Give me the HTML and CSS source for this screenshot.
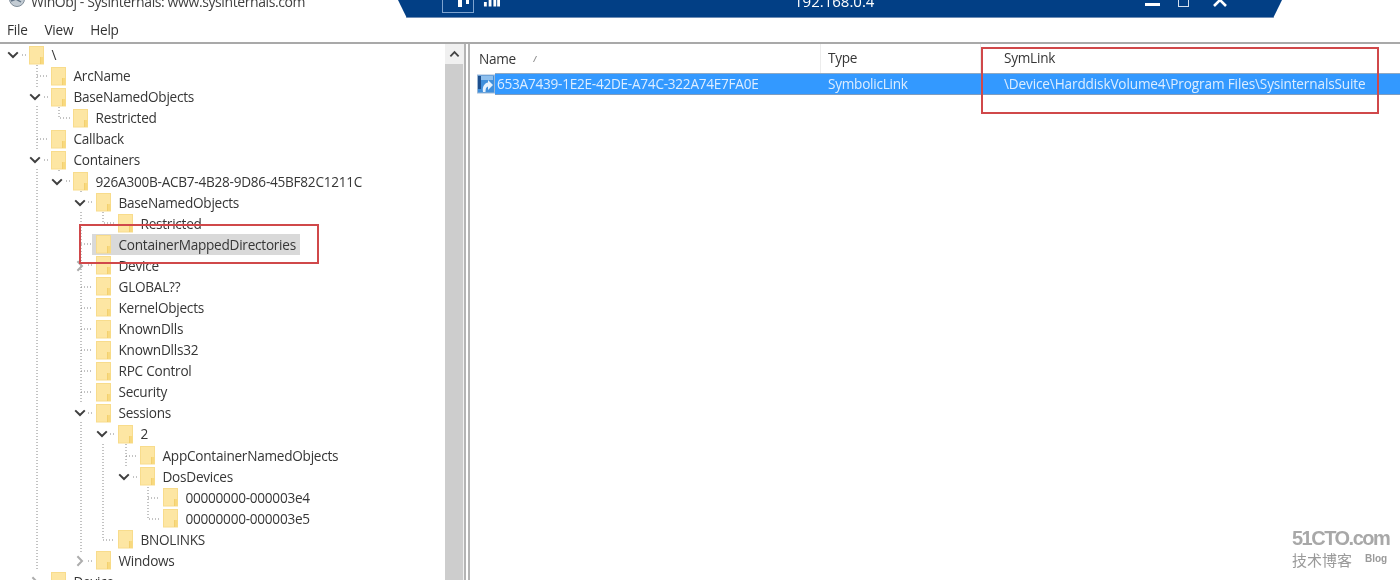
FILE: index.html
```html
<!DOCTYPE html>
<html lang="en">
<head>
<meta charset="utf-8">
<title>WinObj</title>
<link rel="stylesheet" href="styles.css">
</head>
<body>
<svg class="defs" width="0" height="0" aria-hidden="true">
  <symbol id="folder" viewBox="0 0 15 19">
    <rect x="0.5" y="0.5" width="14" height="17.5" fill="#fde6a3" stroke="#f8dc8c"/>
    <rect x="11.5" y="11" width="3" height="7" fill="#f8d97f"/>
    <path d="M11.5 11V18" stroke="#efc861" stroke-width="0.7"/>
  </symbol>
  <symbol id="open" viewBox="0 0 12 8">
    <path d="M1.2 1.4L6 6L10.8 1.4" fill="none" stroke="#3f3f3f" stroke-width="2"/>
  </symbol>
  <symbol id="closed" viewBox="0 0 8 12">
    <path d="M1.4 1.2L6 6L1.4 10.8" fill="none" stroke="#adadad" stroke-width="2"/>
  </symbol>
</svg>
<div class="app">
  <div class="title">
    <svg class="app-icon" viewBox="0 0 18 18"><circle cx="9" cy="4" r="7.5" fill="#c3ccd4" stroke="#7f8c98"/><path d="M3 6L14 2M4 2L13 7" stroke="#5f7184" stroke-width="1.4"/></svg>
    <span>WinObj - Sysinternals: www.sysinternals.com</span>
  </div>
  <div class="menu"><span>File</span><span>View</span><span>Help</span></div>
  <div class="panes">
    <div class="tree-pane">
      <div class="tree">
        <svg class="guides" viewBox="0 44 445 536" aria-hidden="true">
          <path d="M37 65V88M37 106V151M37 169V570M37 76H48M44 97H48M37 139H48M44 160H48
                   M59 107V118H70M59 170V172M66 181H70
                   M81 191V193M81 212V404M81 422V552M88 202H92M81 244H92M88 265H92M81 287H93M81 308H93M81 329H93M81 350H93M81 371H93M81 392H93M88 413H92M88 561H92
                   M103 212V223H115M103 444V540H115M110 434H115
                   M126 444V468M126 456H137M133 477H137
                   M148 487V519H160M148 498H160
                   M22 55H26" />
        </svg>
        <div class="row l0"><svg class="tw"><use href="#open"/></svg><span class="node"><svg class="fd"><use href="#folder"/></svg><span class="label">\</span></span></div>
        <div class="row l1"><span class="tw"></span><span class="node"><svg class="fd"><use href="#folder"/></svg><span class="label">ArcName</span></span></div>
        <div class="row l1"><svg class="tw"><use href="#open"/></svg><span class="node"><svg class="fd"><use href="#folder"/></svg><span class="label">BaseNamedObjects</span></span></div>
        <div class="row l2"><span class="tw"></span><span class="node"><svg class="fd"><use href="#folder"/></svg><span class="label">Restricted</span></span></div>
        <div class="row l1"><span class="tw"></span><span class="node"><svg class="fd"><use href="#folder"/></svg><span class="label">Callback</span></span></div>
        <div class="row l1"><svg class="tw"><use href="#open"/></svg><span class="node"><svg class="fd"><use href="#folder"/></svg><span class="label">Containers</span></span></div>
        <div class="row l2"><svg class="tw"><use href="#open"/></svg><span class="node"><svg class="fd"><use href="#folder"/></svg><span class="label">926A300B-ACB7-4B28-9D86-45BF82C1211C</span></span></div>
        <div class="row l3"><svg class="tw"><use href="#open"/></svg><span class="node"><svg class="fd"><use href="#folder"/></svg><span class="label">BaseNamedObjects</span></span></div>
        <div class="row l4"><span class="tw"></span><span class="node"><svg class="fd"><use href="#folder"/></svg><span class="label">Restricted</span></span></div>
        <div class="row l3"><span class="tw"></span><span class="node selected"><svg class="fd"><use href="#folder"/></svg><span class="label">ContainerMappedDirectories</span></span></div>
        <div class="row l3"><svg class="tw tw-closed"><use href="#closed"/></svg><span class="node"><svg class="fd"><use href="#folder"/></svg><span class="label">Device</span></span></div>
        <div class="row l3"><span class="tw"></span><span class="node"><svg class="fd"><use href="#folder"/></svg><span class="label">GLOBAL??</span></span></div>
        <div class="row l3"><span class="tw"></span><span class="node"><svg class="fd"><use href="#folder"/></svg><span class="label">KernelObjects</span></span></div>
        <div class="row l3"><span class="tw"></span><span class="node"><svg class="fd"><use href="#folder"/></svg><span class="label">KnownDlls</span></span></div>
        <div class="row l3"><span class="tw"></span><span class="node"><svg class="fd"><use href="#folder"/></svg><span class="label">KnownDlls32</span></span></div>
        <div class="row l3"><span class="tw"></span><span class="node"><svg class="fd"><use href="#folder"/></svg><span class="label">RPC Control</span></span></div>
        <div class="row l3"><span class="tw"></span><span class="node"><svg class="fd"><use href="#folder"/></svg><span class="label">Security</span></span></div>
        <div class="row l3"><svg class="tw"><use href="#open"/></svg><span class="node"><svg class="fd"><use href="#folder"/></svg><span class="label">Sessions</span></span></div>
        <div class="row l4"><svg class="tw"><use href="#open"/></svg><span class="node"><svg class="fd"><use href="#folder"/></svg><span class="label">2</span></span></div>
        <div class="row l5"><span class="tw"></span><span class="node"><svg class="fd"><use href="#folder"/></svg><span class="label">AppContainerNamedObjects</span></span></div>
        <div class="row l5"><svg class="tw"><use href="#open"/></svg><span class="node"><svg class="fd"><use href="#folder"/></svg><span class="label">DosDevices</span></span></div>
        <div class="row l6"><span class="tw"></span><span class="node"><svg class="fd"><use href="#folder"/></svg><span class="label">00000000-000003e4</span></span></div>
        <div class="row l6"><span class="tw"></span><span class="node"><svg class="fd"><use href="#folder"/></svg><span class="label">00000000-000003e5</span></span></div>
        <div class="row l4"><span class="tw"></span><span class="node"><svg class="fd"><use href="#folder"/></svg><span class="label">BNOLINKS</span></span></div>
        <div class="row l3"><svg class="tw tw-closed"><use href="#closed"/></svg><span class="node"><svg class="fd"><use href="#folder"/></svg><span class="label">Windows</span></span></div>
        <div class="row l1"><svg class="tw tw-closed"><use href="#closed"/></svg><span class="node"><svg class="fd"><use href="#folder"/></svg><span class="label">Device</span></span></div>
      </div>
      <div class="scrollbar">
        <div class="scroll-btn"><svg viewBox="0 0 12 8" class="scroll-up"><path d="M1.5 6.5L6 2L10.5 6.5" fill="none" stroke="#444" stroke-width="2"/></svg></div>
        <div class="scroll-thumb"></div>
      </div>
    </div>
    <div class="list-pane">
      <div class="list-head">
        <div class="col col-name">Name<svg class="sort" viewBox="0 0 6 8"><path d="M1.5 7L4.5 1" stroke="#8a8a8a" stroke-width="1"/></svg></div>
        <div class="col col-type">Type</div>
        <div class="col col-link">SymLink</div>
      </div>
      <div class="list-row">
        <svg class="link-icon" viewBox="0 0 18 20"><rect x="0.5" y="1" width="17" height="18" fill="#3f8fdc" stroke="#9db8d6"/><path d="M4 2H16V6H4z" fill="#8fc0ee"/><rect x="1" y="2" width="3" height="13" fill="#1d4f8e"/><path d="M6 18C5 12 8 9 11 8.500V6L16 11L11 16V12.500C9 13 8.500 15 8.500 18z" fill="#e6f2fd"/></svg>
        <div class="row-cells">
          <div class="cell cell-name">653A7439-1E2E-42DE-A74C-322A74E7FA0E</div>
          <div class="cell cell-type">SymbolicLink</div>
          <div class="cell cell-link">\Device\HarddiskVolume4\Program Files\SysinternalsSuite</div>
        </div>
      </div>
    </div>
  </div>
</div>

<div class="rdp">
  <div class="rdp-pin">
    <span class="pin-stem"></span>
    <span class="pin-stub"></span>
  </div>
  <svg class="rdp-signal" viewBox="0 0 18 14"><path d="M1 9h3v5H1zM6 6h3v8H6zM11 3h3v11h-3zM15 0h3v14h-3z" fill="#fff"/></svg>
  <span class="rdp-host">192.168.0.4</span>
  <span class="rdp-min"></span>
  <span class="rdp-restore"></span>
  <svg class="rdp-close" viewBox="0 0 16 8"><path d="M2 -6L14 6M14 -6L2 6" stroke="#fff" stroke-width="2.6"/></svg>
</div>

<div class="mark mark-tree"></div>
<div class="mark mark-link"></div>

<div class="watermark">
  <div class="wm-top">51CTO.com</div>
  <div class="wm-bottom"><span>技术博客</span><span class="wm-blog">Blog</span></div>
</div>
</body>
</html>
```

FILE: styles.css
```css
html, body {
  margin: 0;
  height: 580px;
  overflow: hidden;
  background: #fff;
}
body {
  position: relative;
  font-family: "Open Sans", "Noto Sans", sans-serif;
  font-size: 13.6px;
  letter-spacing: -0.25px;
  color: #363636;
  filter: blur(0.35px);
}
.defs { position: absolute; }
.app {
  display: flex;
  flex-direction: column;
  height: 580px;
}
.title {
  height: 21px;
  overflow: hidden;
  display: flex;
  align-items: flex-start;
  gap: 5px;
  padding-left: 8px;
  font-size: 14px;
  letter-spacing: -0.4px;
  line-height: 20px;
  color: #3f3f3f;
}
.title span { margin-top: -8px; }
.app-icon { width: 18px; height: 18px; margin-top: -5px; flex: none; }
.menu {
  height: 21px;
  display: flex;
  gap: 17px;
  padding-left: 7px;
  line-height: 18px;
  color: #333;
}
.panes {
  flex: 1;
  display: flex;
  min-height: 0;
  border-top: 2px solid #a9a9a9;
}
.tree-pane {
  width: 464px;
  flex: none;
  display: flex;
  border-right: 2px solid #b4b4b4;
}
.tree {
  position: relative;
  flex: 1;
  overflow: hidden;
  padding-top: 0.5px;
}
.guides {
  position: absolute;
  left: 0;
  top: 0;
  width: 445px;
  height: 536px;
  fill: none;
  stroke: #868686;
  stroke-width: 1;
  stroke-dasharray: 1 2;
}
.row {
  position: relative;
  display: flex;
  align-items: center;
  height: 21.08px;
  white-space: nowrap;
}
.l0 { padding-left: 7px; }
.l1 { padding-left: 29px; }
.l2 { padding-left: 51px; }
.l3 { padding-left: 74px; }
.l4 { padding-left: 96px; }
.l5 { padding-left: 118px; }
.l6 { padding-left: 141px; }
.tw {
  width: 12px;
  height: 8px;
  margin-right: 10px;
  flex: none;
}
.tw-closed {
  width: 8px;
  height: 12px;
  margin-left: 2px;
  margin-right: 12px;
}
.node {
  display: flex;
  align-items: center;
  gap: 7.5px;
  height: 21px;
  margin-left: -4px;
  padding: 0 4px;
}
.label { margin-bottom: 1px; }
.fd { width: 15px; height: 19px; flex: none; }
.selected { background: #d9d9d9; }
.scrollbar {
  width: 19px;
  flex: none;
  display: flex;
  flex-direction: column;
  background: #f0f0f0;
}
.scroll-btn {
  height: 20px;
  display: flex;
  align-items: center;
  justify-content: center;
}
.scroll-up { width: 11px; height: 8px; }
.scroll-thumb { flex: 1; background: #cdcdcd; margin-right: 1px; }
.list-pane {
  flex: 1;
  margin-left: 2px;
  border-left: 2px solid #b4b4b4;
  min-width: 0;
}
.list-head {
  display: flex;
  height: 29px;
  line-height: 27px;
  color: #363636;
}
.col {
  box-sizing: border-box;
  padding-left: 9px;
  border-right: 1px solid #ececec;
}
.col-name { width: 351px; display: flex; align-items: center; }
.col-type { width: 160px; padding-left: 7px; }
.col-link { flex: 1; border-right: 0; padding-left: 23px; }
.sort { width: 6px; height: 8px; margin-left: 16px; }
.list-row {
  display: flex;
  align-items: center;
  height: 22px;
  padding-left: 7px;
}
.link-icon { width: 18px; height: 20px; flex: none; }
.row-cells {
  flex: 1;
  display: flex;
  height: 22px;
  line-height: 19px;
  background: #3399ff;
  color: #dcedff;
  border-top: 1px solid #8fa9c4;
  border-bottom: 1px solid #7f9dc0;
  box-sizing: border-box;
  white-space: nowrap;
}
.cell { padding-left: 2px; }
.cell-name { width: 329px; }
.cell-type { width: 174px; }
.cell-link { letter-spacing: -0.14px; }

.rdp {
  position: absolute;
  left: 398px;
  top: 0;
  width: 884px;
  height: 18px;
  background: #023f85;
  clip-path: polygon(0 0, 100% 0, 99% 100%, 1% 100%);
  color: #fff;
  border-bottom: 1px solid #6f8db5;
  box-sizing: border-box;
  overflow: hidden;
  letter-spacing: 0;
}
.rdp-pin {
  position: absolute;
  left: 44px;
  top: -4px;
  width: 32px;
  height: 17px;
  border: 1px solid #7ea3cf;
  box-sizing: border-box;
}
.pin-stem { position: absolute; left: 15px; top: 0; width: 4px; height: 10px; background: #fff; }
.pin-stub { position: absolute; left: 23px; top: 0; width: 3px; height: 7px; background: #fff; }
.rdp-signal { position: absolute; left: 85px; top: -7px; width: 17px; height: 14px; }
.rdp-host {
  position: absolute;
  left: 396px;
  top: -9px;
  font-size: 15px;
  line-height: 20px;
}
.rdp-min { position: absolute; left: 747px; top: 3px; width: 15px; height: 3px; background: #fff; }
.rdp-restore { position: absolute; left: 780px; top: -4px; width: 11px; height: 11px; border: 1px solid #d4dfee; box-sizing: border-box; }
.rdp-close { position: absolute; left: 813px; top: 0; width: 18px; height: 8px; }

.mark {
  position: absolute;
  box-sizing: border-box;
  border: 2px solid #d0484a;
}
.mark-tree { left: 79px; top: 224px; width: 240px; height: 40px; }
.mark-link { left: 981px; top: 47px; width: 398px; height: 67px; }

.watermark {
  position: absolute;
  left: 1292px;
  top: 526px;
  width: 108px;
  color: #9a9a9a;
  letter-spacing: 0;
}
.wm-top {
  font-family: "Liberation Sans", sans-serif;
  font-weight: 700;
  font-size: 20px;
  line-height: 24px;
  letter-spacing: -1.5px;
  color: #a8a8a8;
}
.wm-bottom {
  display: flex;
  align-items: flex-start;
  gap: 13px;
  font-family: "Noto Sans CJK SC", sans-serif;
  font-size: 15px;
  line-height: 20px;
}
.wm-blog {
  font-family: "Liberation Sans", sans-serif;
  font-size: 10px;
  line-height: 14px;
  font-weight: 700;
  margin-top: 2px;
}
```
